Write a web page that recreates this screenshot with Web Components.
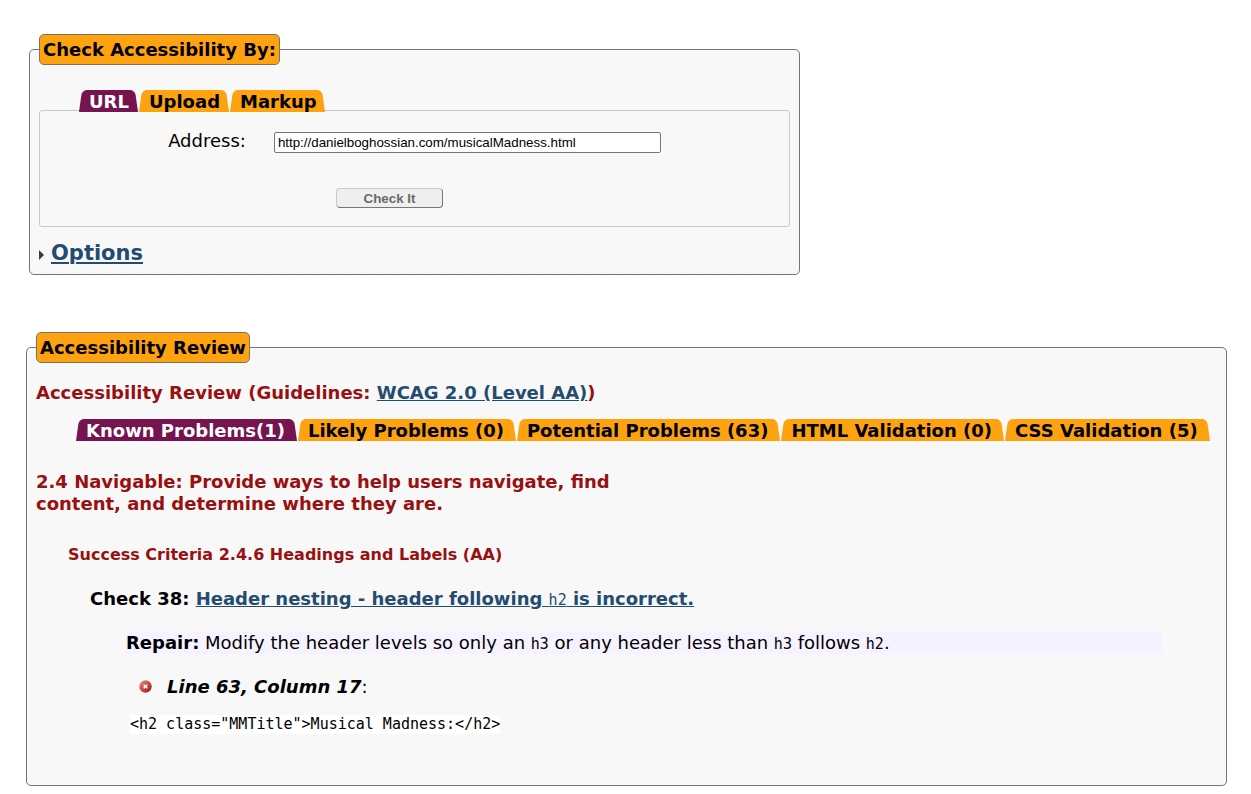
<!DOCTYPE html>
<html lang="en">
<head>
<meta charset="utf-8">
<title>Accessibility Checker</title>
<style>
  body {
    margin: 0;
    background: #fff;
    color: #000;
    font: 18px/22px "DejaVu Sans", Verdana, sans-serif;
  }
</style>
</head>
<body>
<checker-app></checker-app>

<script>
const define = (name, markup, setup) => {
  const template = document.createElement('template');
  template.innerHTML = markup;
  customElements.define(name, class extends HTMLElement {
    constructor() {
      super();
      this.attachShadow({ mode: 'open' }).append(template.content.cloneNode(true));
    }
    connectedCallback() { if (setup) setup(this, this.shadowRoot); }
  });
};

/* Framed group with an orange caption sitting on its top border */
define('titled-panel', `
  <style>
    :host { display: block; }
    fieldset {
      margin: 0; padding: 0 9px; min-width: 0;
      border: 1px solid #6f7488; border-radius: 5px; background: #f8f8f8;
    }
    legend {
      padding: 4px 3px; line-height: 21px; font-weight: bold;
      border: 1px solid #7d7460; border-radius: 5px; background: #ffa20f;
    }
  </style>
  <fieldset><legend></legend><slot></slot></fieldset>
`, (el, root) => { root.querySelector('legend').textContent = el.getAttribute('caption'); });

/* Slanted tab; two skewed halves make the sloping sides */
define('slant-tab', `
  <style>
    :host { display: block; --fill: #ffa20f; color: #000; }
    :host([selected]) { --fill: #75144f; color: #fff; }
    a {
      display: block; position: relative; isolation: isolate;
      padding: 2px var(--tab-end, 9px) 0 10px; color: inherit; font-weight: bold; line-height: 20px;
      text-decoration: none; white-space: nowrap;
    }
    a::before, a::after {
      content: ""; position: absolute; z-index: -1; top: 0; bottom: 0;
      background: var(--fill);
    }
    a::before { left: 0; right: 40%; border-top-left-radius: 5px; transform: skewX(-8deg); transform-origin: 0 100%; }
    a::after { right: 0; left: 40%; border-top-right-radius: 5px; transform: skewX(8deg); transform-origin: 100% 100%; }
  </style>
  <a href="#"><slot></slot></a>
`);

define('tab-row', `
  <style>
    :host { display: flex; gap: 1px; padding-left: 40px; }
  </style>
  <slot></slot>
`);

define('address-form', `
  <style>
    :host { display: block; }
    form { border: 1px solid #c6c9cc; border-radius: 3px; padding: 20px 0 18px; }
    .row { display: flex; justify-content: center; align-items: flex-end; gap: 28px; height: 22px; }
    input {
      box-sizing: border-box; width: 387px; max-width: 60%; height: 21px; margin: 0;
      border: 1px solid #767676; border-radius: 2px; padding: 1px 3px;
      background: #fff; color: #000; font-family: "Liberation Sans", Arial, sans-serif;
    }
    label { line-height: 24px; }
    .actions { display: flex; justify-content: center; padding: 35px 50px 0 0; }
    button {
      box-sizing: border-box; width: 107px; height: 20px; padding: 0;
      border: 1px solid; border-color: #c8c8c8 #767676 #767676 #c8c8c8; border-radius: 4px;
      background: #efefef; color: #6a6a6a;
      font-family: "Liberation Sans", Arial, sans-serif; font-weight: bold;
    }
  </style>
  <form>
    <div class="row">
      <label for="address">Address:</label>
      <input id="address" type="text" value="http://danielboghossian.com/musicalMadness.html">
    </div>
    <div class="actions"><button type="button">Check It</button></div>
  </form>
`);

define('options-toggle', `
  <style>
    :host { display: flex; align-items: center; gap: 7px; line-height: 26px; }
    svg { display: block; margin-top: 4px; }
    a { color: #234c70; font-size: 21px; font-weight: bold; }
  </style>
  <svg width="5" height="10" viewBox="0 0 5 10" aria-hidden="true"><path d="M0 0L5 5L0 10Z" fill="#3c3c3c"/></svg>
  <a href="#"><slot></slot></a>
`);

define('error-icon', `
  <style>:host { display: block; } svg { display: block; }</style>
  <svg width="14" height="14" viewBox="0 0 14 14" aria-hidden="true">
    <defs>
      <linearGradient id="g" x1="0" y1="0" x2="1" y2="1">
        <stop offset="0" stop-color="#dc9a92"/><stop offset=".5" stop-color="#c74b42"/><stop offset="1" stop-color="#97170f"/>
      </linearGradient>
    </defs>
    <circle cx="6.5" cy="6.5" r="6.2" fill="url(#g)"/>
    <path d="M4.7 4.7L8.3 8.3M8.3 4.7L4.7 8.3" stroke="#fff" stroke-width="1.6"/>
  </svg>
`);

define('review-result', `
  <style>
    :host { display: block; }
    h3, h4, h5, p, pre { margin: 0; }
    h3, h4 { color: #981010; }
    h3 { max-width: 50%; font-size: 18px; }
    h4 { margin: 28px 0 0 32px; font-size: 16px; line-height: 24px; }
    h5 { margin: 21px 0 0 54px; font-size: 18px; }
    a { color: #234c70; }
    code { font: 15px "DejaVu Sans Mono", monospace; }
    .repair { margin: 21px 55px 0 90px; line-height: 23px; background: #f6f2ff; }
    .place { display: flex; align-items: center; gap: 14px; margin: 22px 0 0 103px; }
    pre { margin: 15px 0 0 94px; line-height: 19px; }
    pre code { display: inline-block; line-height: 19px; background: #fff; }
  </style>
  <h3>2.4 Navigable: Provide ways to help users navigate, find content, and determine where they are.</h3>
  <h4>Success Criteria 2.4.6 Headings and Labels (AA)</h4>
  <h5>Check 38: <a href="#">Header nesting - header following <code>h2</code> is incorrect.</a></h5>
  <p class="repair"><strong>Repair:</strong> Modify the header levels so only an <code>h3</code> or any header less than <code>h3</code> follows <code>h2</code>.</p>
  <div class="place"><error-icon></error-icon><p><strong><em>Line 63, Column 17</em></strong>:</p></div>
  <pre><code>&lt;h2 class="MMTitle"&gt;Musical Madness:&lt;/h2&gt;</code></pre>
`);

define('checker-app', `
  <style>
    :host { display: block; padding: 34px 24px 8px 26px; }
    .check { max-width: 771px; margin: 0 0 57px 3px; }
    .check tab-row { margin: 25px 0 -2px; position: relative; z-index: 1; }
    .review tab-row { --tab-end: 12px; }
    options-toggle { margin: 13px 0 8px; }
    h2 { margin: 19px 0 15px; font-size: 18px; color: #981010; }
    h2 a { color: #234c70; }
    review-result { margin: 30px 0 51px; }
  </style>
  <titled-panel class="check" caption="Check Accessibility By:">
    <tab-row>
      <slant-tab selected>URL</slant-tab>
      <slant-tab>Upload</slant-tab>
      <slant-tab>Markup</slant-tab>
    </tab-row>
    <address-form></address-form>
    <options-toggle>Options</options-toggle>
  </titled-panel>
  <titled-panel class="review" caption="Accessibility Review">
    <h2>Accessibility Review (Guidelines: <a href="#">WCAG 2.0 (Level AA)</a>)</h2>
    <tab-row>
      <slant-tab selected>Known Problems(1)</slant-tab>
      <slant-tab>Likely Problems (0)</slant-tab>
      <slant-tab>Potential Problems (63)</slant-tab>
      <slant-tab>HTML Validation (0)</slant-tab>
      <slant-tab>CSS Validation (5)</slant-tab>
    </tab-row>
    <review-result></review-result>
  </titled-panel>
`);
</script>
</body>
</html>
